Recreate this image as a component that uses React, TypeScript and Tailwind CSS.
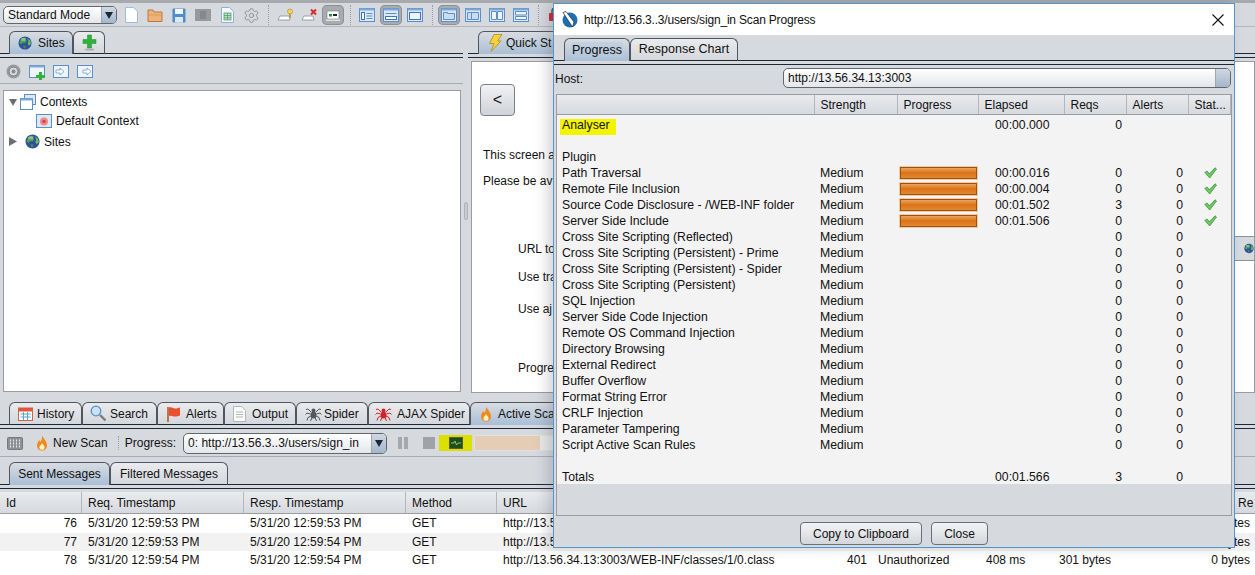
import { Settings } from "lucide-react";
import clsx from "clsx";
import type { ReactNode } from "react";

const Globe = ({ size = 16 }: { size?: number }) => (
  <svg width={size} height={size} viewBox="0 0 16 16">
    <circle cx="8" cy="8" r="7.5" fill="#2f4f9f" />
    <path d="M3 4.5 6 1.8 9.5 2 8.5 4 10 5.5 8 8 5.5 7.5 4 9.5 1.5 8Z" fill="#4fa64a" />
    <path d="M10.5 2.5 14 5 14.8 9 12.5 11 11 8.5 12 6Z" fill="#6dbb5a" />
    <path d="M6 10.5 9 11 8.5 14 6.5 14Z" fill="#3f8f4a" />
    <ellipse cx="6" cy="4" rx="3" ry="1.6" fill="#ffffff" opacity="0.35" />
  </svg>
);

const Flame = () => (
  <svg width="12" height="16" viewBox="0 0 12 16">
    <path d="M6 .5C7 3 11 6 11 10.5 11 13.5 8.8 15.5 6 15.5S1 13.5 1 10.5C1 8 2.5 7 3 5c.8.6 1.2 1.3 1.3 2C5.500 5.500 6.300 3 6 .5Z" fill="#f08a1c" />
    <path d="M6 8c.5 1.300 2.600 2.600 2.600 4.500 0 1.500-1.100 2.300-2.600 2.300s-2.600-.8-2.600-2.300C3.400 10.800 5.600 9.800 6 8Z" fill="#fff3c4" />
  </svg>
);

const Spider = ({ color }: { color: string }) => (
  <svg width="17" height="16" viewBox="0 0 17 16" stroke={color} strokeWidth="1" fill="none">
    <path d="M6 6 3 3 1 3.500M11 6l3-3 2 .5M5.500 8 2 7 .5 8.500M11.500 8 15 7l1.500 1.500M6 10l-3 1.500-1 3M11 10l3 1.500 1 3M7 11.500 5.500 15M10 11.500l1.500 3.500" />
    <ellipse cx="8.500" cy="9" rx="3" ry="3.500" fill={color} stroke="none" />
    <circle cx="8.500" cy="4.500" r="2" fill={color} stroke="none" />
  </svg>
);

const Check = () => (
  <svg width="13" height="12" viewBox="0 0 13 12">
    <path d="M.8 5.500 3 4l2.500 2.800L11 .8 12.500 2 5.700 11Z" fill="#6fca62" stroke="#3b9442" strokeWidth="0.8" />
  </svg>
);

const Dots = () => (
  <div className="flex w-[10px] justify-center">
    <div className="h-[20px] border-l border-dotted border-[#9b9ea3]" />
  </div>
);

const ToolIcon = ({ pressed, children }: { pressed?: boolean; children: ReactNode }) => (
  <div className="flex h-[23px] w-[24px] items-center justify-center">
    <div
      className={clsx(
        "flex h-[20px] w-[22px] items-center justify-center rounded-[5px]",
        pressed && "bg-[#a8abb1] shadow-[inset_0_0_0_1px_#8d9096]",
      )}
    >
      {children}
    </div>
  </div>
);

const Layout = ({ children }: { children?: ReactNode }) => (
  <svg width="16" height="14" viewBox="0 0 16 14">
    <rect x=".5" y=".5" width="15" height="13" fill="#dce8f5" stroke="#5c8fc7" />
    <rect x=".5" y=".5" width="15" height="2" fill="#7ea9d8" />
    {children}
  </svg>
);

const Tab = ({
  active,
  className,
  children,
}: {
  active?: boolean;
  className?: string;
  children: ReactNode;
}) => (
  <div
    className={clsx(
      "relative -mb-px flex h-[23px] shrink-0 items-center rounded-t-[6px] border border-[#50565e] whitespace-nowrap",
      active
        ? "z-10 border-b-0 bg-gradient-to-b from-[#d9dce1] to-[#a9bfd6]"
        : "border-b-[#1c2838] bg-gradient-to-b from-[#e9ebee] to-[#d4d7dc]",
      className,
    )}
  >
    {children}
  </div>
);

// tab strip with the double dark line under it
const TabStrip = ({ className, children }: { className?: string; children: ReactNode }) => (
  <>
    <div className={clsx("flex items-end border-b border-[#1c2838]", className)}>{children}</div>
    <div className="h-[4px] shrink-0 border-b border-[#1c2838]" />
  </>
);

const Combo = ({
  className,
  text,
  plain,
}: {
  className?: string;
  text: string;
  plain?: boolean;
}) => (
  <div
    className={clsx(
      "flex shrink-0 items-stretch overflow-hidden rounded-[5px] border border-[#60666e] bg-gradient-to-b from-white to-[#e4e6ea]",
      className,
    )}
  >
    <div className="flex-1 self-center truncate pl-[4px] leading-[16px]">{text}</div>
    <div className="flex w-[15px] items-center justify-center border-l border-[#a0a8b2] bg-gradient-to-b from-[#cfd8e2] to-[#a3b7cb]">
      {!plain && (
        <svg width="8" height="7" viewBox="0 0 8 7">
          <path d="M0 0h8L4 7Z" fill="#1c2838" />
        </svg>
      )}
    </div>
  </div>
);

const scanRows = [
  ["Path Traversal", "Medium", "00:00.016", "0", "0", true],
  ["Remote File Inclusion", "Medium", "00:00.004", "0", "0", true],
  ["Source Code Disclosure - /WEB-INF folder", "Medium", "00:01.502", "3", "0", true],
  ["Server Side Include", "Medium", "00:01.506", "0", "0", true],
  ["Cross Site Scripting (Reflected)", "Medium", "", "0", "0", false],
  ["Cross Site Scripting (Persistent) - Prime", "Medium", "", "0", "0", false],
  ["Cross Site Scripting (Persistent) - Spider", "Medium", "", "0", "0", false],
  ["Cross Site Scripting (Persistent)", "Medium", "", "0", "0", false],
  ["SQL Injection", "Medium", "", "0", "0", false],
  ["Server Side Code Injection", "Medium", "", "0", "0", false],
  ["Remote OS Command Injection", "Medium", "", "0", "0", false],
  ["Directory Browsing", "Medium", "", "0", "0", false],
  ["External Redirect", "Medium", "", "0", "0", false],
  ["Buffer Overflow", "Medium", "", "0", "0", false],
  ["Format String Error", "Medium", "", "0", "0", false],
  ["CRLF Injection", "Medium", "", "0", "0", false],
  ["Parameter Tampering", "Medium", "", "0", "0", false],
  ["Script Active Scan Rules", "Medium", "", "0", "0", false],
] as const;

const ScanRow = ({
  name,
  strength,
  progress,
  elapsed,
  reqs,
  alerts,
  done,
}: {
  name?: ReactNode;
  strength?: string;
  progress?: boolean;
  elapsed?: string;
  reqs?: string;
  alerts?: string;
  done?: boolean;
}) => (
  <div className="grid h-[16px] grid-cols-[258px_83px_81px_86px_62px_62px_42px] items-center text-[12.25px] leading-none">
    <div className="pl-[5px] whitespace-nowrap">{name}</div>
    <div className="pl-[5px]">{strength}</div>
    <div className="pl-[1px]">
      {progress && (
        <div className="h-[14px] w-[79px] border border-[#f3c8a0]">
          <div className="h-full border border-[#9a5410] bg-gradient-to-b from-[#eda35a] via-[#dc7210] to-[#e08a35]" />
        </div>
      )}
    </div>
    <div className="pl-[16px]">{elapsed}</div>
    <div className="pr-[5px] text-right">{reqs}</div>
    <div className="pr-[6px] text-right">{alerts}</div>
    <div className="flex justify-center">{done && <Check />}</div>
  </div>
);

// rows 76 and 77 sit mostly behind the scan window, only their ends show
const messages = [
  { id: "76", req: "5/31/20 12:59:53 PM", resp: "5/31/20 12:59:53 PM", url: "http://13.5" },
  { id: "77", req: "5/31/20 12:59:53 PM", resp: "5/31/20 12:59:54 PM", url: "http://13.5" },
  {
    id: "78",
    req: "5/31/20 12:59:54 PM",
    resp: "5/31/20 12:59:54 PM",
    url: "http://13.56.34.13:3003/WEB-INF/classes/1/0.class",
    code: "401",
    reason: "Unauthorized",
    rtt: "408 ms",
    size: "301 bytes",
  },
];

const msgCols = "grid grid-cols-[82px_162px_162px_91px_308px_67px_108px_73px_155px_47px]";

const Heads = ["Id", "Req. Timestamp", "Resp. Timestamp", "Method", "URL"];

export default function App() {
  return (
    <div className="relative h-[575px] w-[1255px] overflow-hidden bg-[#d6d9de] font-['Liberation_Sans',Arial,sans-serif] text-[12px] text-[#111]">
      <div className="h-[3px] bg-[#a7a9ac]" />

      {/* MAIN TOOLBAR */}
      <div className="flex h-[24px] items-center border-b border-[#b4b6ba] pl-[3px] pt-[1px]">
        <Combo className="mr-[2px] h-[18px] w-[114px]" text="Standard Mode" />
        <ToolIcon>
          <svg width="13" height="16" viewBox="0 0 13 16">
            <path d="M.5.5h8l4 4v11H.500Z" fill="#fff" stroke="#9fbcdc" />
          </svg>
        </ToolIcon>
        <ToolIcon>
          <svg width="16" height="15" viewBox="0 0 16 15">
            <path d="M1 2h5l1 2h8v9.500H1Z" fill="#eeb27a" stroke="#b9793f" />
            <path d="M1 7h14" stroke="#d89857" />
          </svg>
        </ToolIcon>
        <ToolIcon>
          <svg width="14" height="15" viewBox="0 0 14 15">
            <rect x=".5" y=".5" width="13" height="14" rx="1" fill="#4f8ccb" />
            <rect x="3" y="1" width="8" height="5" fill="#f3f6fa" />
            <rect x="3" y="9" width="8" height="5.500" fill="#dfe8f2" />
          </svg>
        </ToolIcon>
        <ToolIcon>
          <svg width="16" height="12" viewBox="0 0 16 12">
            <rect width="16" height="12" fill="#97999c" />
            <rect x="5" y="2" width="6" height="8" fill="#86888b" />
          </svg>
        </ToolIcon>
        <ToolIcon>
          <svg width="13" height="16" viewBox="0 0 13 16">
            <path d="M.5.5h8l4 4v11H.500Z" fill="#f6f9fd" stroke="#8fb0d4" />
            <rect x="3" y="6" width="7" height="7" fill="#bfe0bf" stroke="#3f8f5f" strokeWidth="0.7" />
            <path d="M3 8.500h7M3 10.800h7M6.500 6v7" stroke="#3f8f5f" strokeWidth="0.6" />
          </svg>
        </ToolIcon>
        <ToolIcon>
          <Settings size={17} strokeWidth={1.2} color="#85878a" />
        </ToolIcon>
        <Dots />
        <ToolIcon>
          <svg width="17" height="15" viewBox="0 0 17 15">
            <path d="M3 8h9l1 4H1Z" fill="#fff" stroke="#8b8e92" strokeWidth="0.8" />
            <circle cx="13" cy="3.500" r="2.500" fill="#f6d25c" stroke="#a88a2a" strokeWidth="0.6" />
            <rect x="12" y="6" width="2" height="4" fill="#b6a14f" />
          </svg>
        </ToolIcon>
        <ToolIcon>
          <svg width="17" height="15" viewBox="0 0 17 15">
            <path d="M3 8h9l1 4H1Z" fill="#fff" stroke="#8b8e92" strokeWidth="0.8" />
            <path d="M10 1.500l5 5M15 1.500l-5 5" stroke="#d92a2a" strokeWidth="2" />
          </svg>
        </ToolIcon>
        <ToolIcon pressed>
          <svg width="16" height="11" viewBox="0 0 16 11">
            <path d="M1 10h14" stroke="#f2f2f2" strokeWidth="1.500" />
            <rect x="2" y="1" width="12" height="8" fill="#fff" stroke="#777" strokeWidth="0.6" />
            <rect x="4" y="4" width="3" height="2.500" fill="#1c9a2c" />
            <rect x="8" y="4" width="4" height="2" fill="#222" />
          </svg>
        </ToolIcon>
        <Dots />
        <ToolIcon>
          <Layout>
            <rect x="2.500" y="4.500" width="3" height="7" fill="#fff" stroke="#3d76b6" />
            <path d="M7.500 5.500h6M7.500 8h6M7.500 10.500h6" stroke="#5c8fc7" />
          </Layout>
        </ToolIcon>
        <ToolIcon pressed>
          <Layout>
            <path d="M2.500 5.500h11" stroke="#5c8fc7" />
            <rect x="2.500" y="8.500" width="11" height="3" fill="#fff" stroke="#3d76b6" />
          </Layout>
        </ToolIcon>
        <ToolIcon>
          <Layout>
            <rect x="2.500" y="4.500" width="11" height="7" fill="#eef4fb" stroke="#3d76b6" />
          </Layout>
        </ToolIcon>
        <Dots />
        <ToolIcon pressed>
          <Layout>
            <path d="M2.500 4.500h4v1h7v6h-11Z" fill="#c9dcf0" stroke="#5c8fc7" />
          </Layout>
        </ToolIcon>
        <ToolIcon>
          <Layout>
            <path d="M2.500 4.500h4v7h-4ZM6.500 4.500h7v7h-7Z" fill="#c9dcf0" stroke="#5c8fc7" />
          </Layout>
        </ToolIcon>
        <ToolIcon>
          <Layout>
            <path d="M2.500 3.500h5v8h-5ZM8.500 3.500h5v8h-5Z" fill="#eef4fb" stroke="#5c8fc7" />
          </Layout>
        </ToolIcon>
        <ToolIcon>
          <Layout>
            <path d="M2.500 3.500h11v3.500h-11ZM2.500 8.500h11v3h-11Z" fill="#eef4fb" stroke="#5c8fc7" />
          </Layout>
        </ToolIcon>
        <Dots />
        <ToolIcon>
          <svg width="14" height="14" viewBox="0 0 14 14">
            <rect x="1" y="5" width="12" height="8" rx="1" fill="#d8242f" />
            <path d="M4 5V3a3 3 0 0 1 6 0v2" fill="none" stroke="#555" strokeWidth="1.500" />
          </svg>
        </ToolIcon>
      </div>

      {/* WORKSPACE */}
      <div className="flex h-[371px]">
        <div className="flex w-[463px] shrink-0 flex-col pt-[4px]">
          <TabStrip className="pl-[9px]">
            <Tab active className="w-[64px] pl-[8px]">
              <Globe size={14} />
              <span className="ml-[6px]">Sites</span>
            </Tab>
            <Tab className="w-[32px] justify-center">
              <svg width="15" height="17" viewBox="0 0 15 17">
                <path d="M5.500 1h4v4.500H14v4H9.500V14h-4V9.500H1v-4h4.500Z" fill="#2fb13c" stroke="#1f8a2c" strokeWidth="0.5" />
                <ellipse cx="7.500" cy="15.500" rx="5" ry="1" fill="#a9abae" />
              </svg>
            </Tab>
          </TabStrip>

          <div className="flex h-[26px] shrink-0 items-center gap-[8px] border-b border-[#a9abb0] pl-[6px] pt-[2px]">
            <svg width="15" height="15" viewBox="0 0 15 15">
              <circle cx="7.500" cy="7.500" r="7" fill="#9a9c9f" />
              <circle cx="7.500" cy="7.500" r="4.500" fill="#d6d9de" stroke="#77797c" />
              <circle cx="7.500" cy="7.500" r="2" fill="#8a8c8f" />
            </svg>
            <svg width="16" height="16" viewBox="0 0 16 16">
              <rect x=".5" y="1.500" width="15" height="12" fill="#eef4fb" stroke="#5c8fc7" />
              <rect x=".5" y="1.500" width="15" height="2" fill="#7ea9d8" />
              <path d="M10 8h3v3h3v3h-3v2h-3v-2H7v-3h3Z" fill="#2fb13c" />
            </svg>
            <svg width="16" height="14" viewBox="0 0 16 14">
              <rect x=".5" y=".5" width="15" height="12" fill="#eef4fb" stroke="#5c8fc7" />
              <path d="M3 5h4V3l4 3.500L7 10V8H3Z" fill="#fff" stroke="#5c8fc7" strokeWidth="0.7" />
            </svg>
            <svg width="16" height="14" viewBox="0 0 16 14">
              <rect x=".5" y=".5" width="15" height="12" fill="#eef4fb" stroke="#5c8fc7" />
              <path d="M6 5h4V3l4 3.500L10 10V8H6Z" fill="#fff" stroke="#5c8fc7" strokeWidth="0.7" />
            </svg>
          </div>

          <div className="ml-[3px] mt-[6px] h-[302px] w-[458px] border border-[#9a9c9f] bg-white pl-[4px] pt-[1px]">
            <div className="flex h-[19px] items-center">
              <svg width="8" height="8" viewBox="0 0 8 8" className="ml-[1px]">
                <path d="M0 1h8L4 8Z" fill="#6b6e72" />
              </svg>
              <svg width="16" height="16" viewBox="0 0 16 16" className="ml-[3px]">
                <rect x="4.500" y=".5" width="11" height="10" fill="#dce8f5" stroke="#5c8fc7" />
                <rect x=".5" y="4.500" width="12" height="11" fill="#fff" stroke="#5c8fc7" />
                <rect x=".5" y="4.500" width="12" height="2" fill="#7ea9d8" />
              </svg>
              <span className="ml-[4px]">Contexts</span>
            </div>
            <div className="flex h-[19px] items-center pl-[28px]">
              <svg width="16" height="14" viewBox="0 0 16 14">
                <rect x=".5" y=".5" width="15" height="13" fill="#dce8f5" stroke="#5c8fc7" />
                <circle cx="8" cy="7.500" r="4" fill="#ee8a8a" />
                <circle cx="8" cy="7.500" r="1.800" fill="#d8483f" />
              </svg>
              <span className="ml-[4px]">Default Context</span>
            </div>
            <div className="mt-[1px] flex h-[21px] items-center">
              <svg width="8" height="9" viewBox="0 0 8 9" className="ml-[1px]">
                <path d="M0 0l8 4.500L0 9Z" fill="#6b6e72" />
              </svg>
              <div className="ml-[8px]">
                <Globe size={15} />
              </div>
              <span className="ml-[4px]">Sites</span>
            </div>
          </div>
        </div>

        <div className="flex w-[5px] shrink-0 items-center justify-center">
          <div className="mb-[4px] h-[18px] w-[4px] rounded-[2px] border border-[#b0b3b8] bg-[#c8cbd0]" />
        </div>

        <div className="flex min-w-0 flex-1 flex-col pt-[4px]">
          <TabStrip className="pl-[10px]">
            <Tab active className="w-[110px] pl-[9px]">
              <svg width="15" height="18" viewBox="0 0 15 18">
                <path d="M6 .5h8L9.500 7H13L3 17.500 6 9.500H1.500Z" fill="#f6d33c" stroke="#b58a15" strokeWidth="0.8" />
              </svg>
              <span className="ml-[3px]">Quick St</span>
            </Tab>
          </TabStrip>
          <div className="ml-[3px] mt-[3px] flex h-[332px] border border-[#9a9c9f] bg-white">
            <div className="w-[750px] shrink-0 pl-[11px]">
              <button className="-ml-[3px] mt-[22px] flex h-[32px] w-[35px] items-center justify-center rounded-[4px] border border-[#7d8187] bg-gradient-to-b from-[#f1f2f4] to-[#cfd2d7] text-[16px]">
                &lt;
              </button>
              <p className="mt-[30px] whitespace-nowrap">This screen a</p>
              <p className="mt-[8px] whitespace-nowrap">Please be av</p>
              <div className="ml-[35px]">
                <p className="mt-[50px]">URL to</p>
                <p className="mt-[10px]">Use tra</p>
                <p className="mt-[14px]">Use aj</p>
                <p className="mt-[41px]">Progre</p>
              </div>
            </div>
            <div className="min-w-0 flex-1">
              <div className="mt-[174px] flex h-[25px] items-center border-y border-[#8d9096] bg-[#d6d9de] pl-[22px]">
                <Globe size={15} />
              </div>
            </div>
          </div>
        </div>
      </div>

      {/* BOTTOM TABS */}
      <div className="pt-[4px]">
        <TabStrip className="pl-[9px]">
          <Tab className="w-[73px] pl-[8px]">
            <svg width="15" height="15" viewBox="0 0 15 15">
              <rect x=".5" y="2" width="14" height="12.500" fill="#fff" stroke="#c46a4a" />
              <rect x=".5" y="2" width="14" height="3.500" fill="#e0553a" />
              <path d="M2.500 8h10M2.500 11h10M5.500 6v8M9.500 6v8" stroke="#5aa4c8" />
            </svg>
            <span className="ml-[4px]">History</span>
          </Tab>
          <Tab className="w-[75px] pl-[7px]">
            <svg width="17" height="17" viewBox="0 0 17 17">
              <circle cx="6" cy="6" r="4.800" fill="#c9e2f5" stroke="#5c8fc7" strokeWidth="1.300" />
              <path d="M10 10l5.500 5.500" stroke="#7a7d82" strokeWidth="2.400" />
            </svg>
            <span className="ml-[3px]">Search</span>
          </Tab>
          <Tab className="w-[67px] pl-[8px]">
            <svg width="16" height="16" viewBox="0 0 16 16">
              <path d="M2 1v15" stroke="#a8541e" strokeWidth="1.500" />
              <path d="M3 1.500c3-1 4 1 6 1s3-.5 5-1v8c-2 .8-3 1-5 1s-3-1.500-6-.5Z" fill="#e8502e" />
            </svg>
            <span className="ml-[4px]">Alerts</span>
          </Tab>
          <Tab className="w-[72px] pl-[8px]">
            <svg width="13" height="16" viewBox="0 0 13 16">
              <path d="M.5.5h8l4 4v11H.500Z" fill="#fafafa" stroke="#b4b6ba" />
              <path d="M3 6h7M3 8.500h7M3 11h7" stroke="#b4b6ba" />
            </svg>
            <span className="ml-[6px]">Output</span>
          </Tab>
          <Tab className="w-[72px] pl-[8px]">
            <Spider color="#55575a" />
            <span className="ml-[2px]">Spider</span>
          </Tab>
          <Tab className="w-[102px] pl-[6px]">
            <Spider color="#d2232a" />
            <span className="ml-[5px]">AJAX Spider</span>
          </Tab>
          <Tab active className="w-[100px] pl-[9px]">
            <Flame />
            <span className="ml-[6px]">Active Sca</span>
          </Tab>
        </TabStrip>

        {/* SCAN TOOLBAR */}
        <div className="flex h-[28px] items-center border-b border-[#a9abb0] pl-[7px] pt-[1px]">
          <svg width="16" height="13" viewBox="0 0 16 13">
            <rect x=".5" y=".5" width="15" height="12" rx="1" fill="#8f9194" stroke="#77797c" />
            <path d="M3.500 2.500v8M6.500 2.500v8M9.500 2.500v8M12.500 2.500v8" stroke="#e6e6e6" strokeDasharray="2 1" />
          </svg>
          <div className="ml-[13px]">
            <Flame />
          </div>
          <span className="ml-[5px] whitespace-nowrap">New Scan</span>
          <div className="ml-[10px] h-[14px] border-l border-dotted border-[#9b9ea3]" />
          <span className="ml-[6px]">Progress:</span>
          <Combo className="ml-[7px] h-[21px] w-[204px]" text="0: http://13.56.3..3/users/sign_in" />
          <div className="ml-[11px] flex gap-[2px]">
            <div className="h-[12px] w-[4px] bg-[#a6a8ab]" />
            <div className="h-[12px] w-[4px] bg-[#a6a8ab]" />
          </div>
          <div className="ml-[15px] h-[12px] w-[12px] bg-[#a0a2a5]" />
          <div className="ml-[4px] flex h-[16px] w-[33px] items-center justify-center bg-[#dbe000]">
            <svg width="14" height="12" viewBox="0 0 14 12">
              <rect x=".5" y=".5" width="13" height="11" fill="#1f4d1f" stroke="#5c5c2a" />
              <path d="M2 6h3l1-2 1.500 4L9 6h3" stroke="#9fe07f" fill="none" strokeWidth="0.8" />
            </svg>
          </div>
          <div className="ml-[2px] h-[16px] w-[120px] border border-[#e0e0e0] bg-[#e9e9e9]">
            <div className="h-full w-[65px] bg-[#e5ccb4]" />
          </div>
        </div>

        <div className="pt-[5px]">
          <TabStrip className="pl-[9px]">
            <Tab active className="w-[101px] justify-center">
              Sent Messages
            </Tab>
            <Tab className="w-[118px] justify-center">Filtered Messages</Tab>
          </TabStrip>
        </div>

        {/* MESSAGES TABLE */}
        <div className="mt-[3px] min-h-[86px] bg-white">
          <div className={clsx(msgCols, "h-[22px] border-b border-[#9a9c9f] bg-gradient-to-b from-[#e9ebee] to-[#d6d9de]")}>
            {Heads.map((h) => (
              <div key={h} className="flex items-center border-r border-[#b4b6ba] pl-[6px] whitespace-nowrap">
                {h}
              </div>
            ))}
            <div className="col-span-4 border-r border-[#b4b6ba]" />
            <div className="flex items-center pl-[30px] whitespace-nowrap">Re</div>
          </div>
          {messages.map((row, i) => (
            <div key={row.id} className={clsx(msgCols, "h-[18.5px] items-center", i === 1 && "bg-[#f2f2f2]")}>
              <div className="pr-[5px] text-right">{row.id}</div>
              <div className="pl-[6px]">{row.req}</div>
              <div className="pl-[6px]">{row.resp}</div>
              <div className="pl-[6px]">GET</div>
              <div className="pl-[6px] whitespace-nowrap">{row.url}</div>
              <div className="pr-[5px] text-right">{row.code}</div>
              <div className="pl-[6px]">{row.reason}</div>
              <div className="pl-[6px]">{row.rtt}</div>
              <div className="pl-[6px]">{row.size}</div>
              <div className="flex justify-end pr-[5px] whitespace-nowrap">0 bytes</div>
            </div>
          ))}
        </div>
      </div>

      {/* SCAN PROGRESS WINDOW */}
      <div className="absolute left-[553px] top-[3px] z-20 flex h-[545px] w-[682px] flex-col border border-[#4f97d3] bg-[#d6d9de] shadow-[-6px_0_12px_rgba(70,70,80,0.22)]">
        <div className="flex h-[31px] shrink-0 items-center bg-white pl-[8px] pr-[8px]">
          <svg width="16" height="18" viewBox="0 0 16 18">
            <circle cx="8" cy="9" r="7.500" fill="#1d6fb0" />
            <path d="M1 1.500 4 .5 12 11l-1.500 5Z" fill="#fff" stroke="#1c2838" strokeWidth="0.7" />
          </svg>
          <span className="ml-[6px] flex-1 whitespace-nowrap tracking-[-0.18px]">
            http://13.56.3..3/users/sign_in Scan Progress
          </span>
          <svg width="14" height="14" viewBox="0 0 14 14" className="mr-[1px]">
            <path d="M1.500 1.500l11 11M12.500 1.500l-11 11" stroke="#111" strokeWidth="1.100" />
          </svg>
        </div>

        <div className="flex shrink-0 flex-col pt-[3px] text-[12.5px]">
          <TabStrip className="pl-[10px]">
            <Tab active className="w-[66px] justify-center">
              <span className="rounded-[2px] bg-[#b5c9de]/50 px-[1px] leading-[16px]">Progress</span>
            </Tab>
            <Tab className="w-[108px] justify-center">Response Chart</Tab>
          </TabStrip>
        </div>

        <div className="mt-[3px] flex h-[20px] shrink-0 items-center pl-[1px]">
          <span className="w-[228px] pt-[1px]">Host:</span>
          <Combo plain className="h-[20px] w-[448px]" text="http://13.56.34.13:3003" />
        </div>

        <div className="mx-[2px] mt-[6px] flex h-[422px] flex-col border border-[#9a9c9f] bg-[#d6d9de]">
          <div className="grid h-[20px] shrink-0 grid-cols-[258px_83px_81px_86px_62px_62px_42px] border-b border-[#9a9c9f] bg-gradient-to-b from-[#e9ebee] to-[#d6d9de]">
            <div className="border-r border-[#b4b6ba]" />
            {["Strength", "Progress", "Elapsed", "Reqs", "Alerts", "Stat..."].map((h) => (
              <div key={h} className="flex items-center border-r border-[#b4b6ba] pl-[5.5px]">
                {h}
              </div>
            ))}
          </div>
          <div className="h-[369px] shrink-0 bg-[#f3f3f3] pt-[2px]">
            <ScanRow
              name={
                <span className="relative">
                  <span className="absolute left-[-2px] top-[1px] h-[16px] w-[56px] bg-[#f4f400]" />
                  <span className="relative">Analyser</span>
                </span>
              }
              elapsed="00:00.000"
              reqs="0"
            />
            <ScanRow />
            <ScanRow name="Plugin" />
            {scanRows.map((r) => (
              <ScanRow
                key={r[0]}
                name={r[0]}
                strength={r[1]}
                progress={r[5]}
                elapsed={r[2]}
                reqs={r[3]}
                alerts={r[4]}
                done={r[5]}
              />
            ))}
            <ScanRow />
            <ScanRow name="Totals" elapsed="00:01.566" reqs="3" alerts="0" />
          </div>
        </div>

        <div className="flex flex-1 items-start justify-center gap-[9px] pt-[6px]">
          <button className="h-[23px] w-[122px] rounded-[4px] border border-[#6b7078] bg-gradient-to-b from-[#f3f4f6] to-[#d3d6db]">
            Copy to Clipboard
          </button>
          <button className="h-[23px] w-[57px] rounded-[4px] border border-[#6b7078] bg-gradient-to-b from-[#f3f4f6] to-[#d3d6db]">
            Close
          </button>
        </div>
      </div>
    </div>
  );
}
